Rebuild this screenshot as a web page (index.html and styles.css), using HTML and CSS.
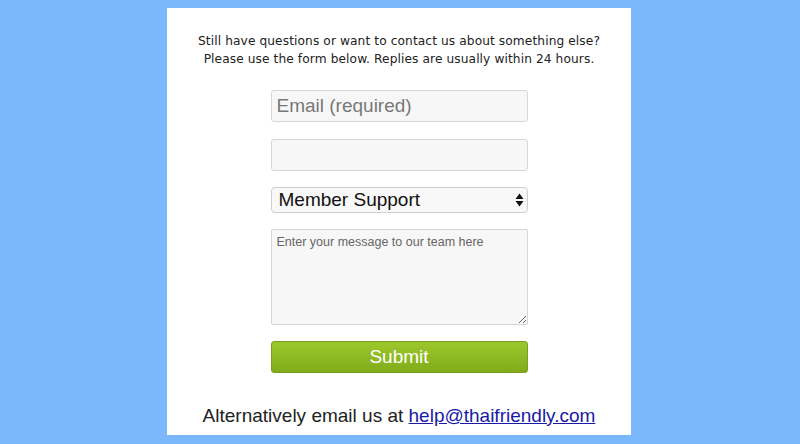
FILE: index.html
```html
<!DOCTYPE html>
<html>
<head>
<meta charset="utf-8">
<link rel="stylesheet" href="styles.css">
</head>
<body>
<div class="card">
  <p class="intro">Still have questions or want to contact us about something else?<br>Please use the form below. Replies are usually within 24 hours.</p>
  <form class="form">
    <input class="field" type="text" placeholder="Email (required)">
    <input class="field" type="text">
    <div class="select">
      <span>Member Support</span>
      <svg class="arrows" width="9" height="14" viewBox="0 0 9 14"><path d="M4.5 0.5 L8.5 6 L0.5 6 Z M0.5 8 L8.5 8 L4.5 13.5 Z" fill="#111"/></svg>
    </div>
    <textarea class="message" placeholder="Enter your message to our team here"></textarea>
    <button class="submit" type="button">Submit</button>
  </form>
  <p class="alt">Alternatively email us at <a href="#">help@thaifriendly.com</a></p>
</div>
</body>
</html>
```
FILE: styles.css
```css
html, body { margin: 0; padding: 0; }
body {
  background: #7ab8fb;
  width: 800px;
  height: 444px;
  overflow: hidden;
  padding-top: 8px;
  box-sizing: border-box;
}
.card {
  width: 464px;
  height: 427px;
  margin-left: 167px;
  background: #fff;
  display: flex;
  flex-direction: column;
  align-items: center;
  box-sizing: border-box;
  padding-top: 24px;
}
.intro {
  margin: 0;
  font-family: "DejaVu Sans", sans-serif;
  font-size: 12.2px;
  line-height: 18px;
  color: #222;
  text-align: center;
  letter-spacing: 0.1px;
}
.form {
  margin-top: 22px;
  width: 257px;
  display: flex;
  flex-direction: column;
}
.field {
  height: 32px;
  box-sizing: border-box;
  border: 1px solid #d6d6d6;
  border-radius: 3px;
  background: #f7f7f7;
  font-family: "Liberation Sans", Arial, sans-serif;
  font-size: 19px;
  padding: 0 5px;
  margin: 0 0 17px 0;
  outline: none;
}
.field + .field { margin-bottom: 16px; }
.field::placeholder { color: #777; }
.select {
  height: 26px;
  box-sizing: border-box;
  border: 1px solid #cfcfcf;
  border-radius: 4px;
  background: #f8f8f8;
  display: flex;
  align-items: center;
  justify-content: space-between;
  padding: 0 3px 0 7px;
  font-family: "Liberation Sans", Arial, sans-serif;
  font-size: 19px;
  color: #111;
  margin-bottom: 16px;
}
.message {
  height: 96px;
  box-sizing: border-box;
  border: 1px solid #d6d6d6;
  border-radius: 2px;
  background: #f7f7f7;
  font-family: "Liberation Sans", Arial, sans-serif;
  font-size: 12.5px;
  padding: 5px 5px;
  margin: 0 0 16px 0;
  resize: vertical;
  outline: none;
}
.message::placeholder { color: #666; }
.submit {
  height: 32px;
  border: 1px solid #7c9e22;
  border-radius: 3px;
  background: linear-gradient(#9cc72c, #80ac1b);
  color: #fff;
  font-family: "Liberation Sans", Arial, sans-serif;
  font-size: 19px;
  padding: 0;
}
.alt {
  margin: 32px 0 0 0;
  font-family: "Liberation Sans", Arial, sans-serif;
  font-size: 19px;
  color: #222;
}
.alt a { color: #1a1aa6; }
```
